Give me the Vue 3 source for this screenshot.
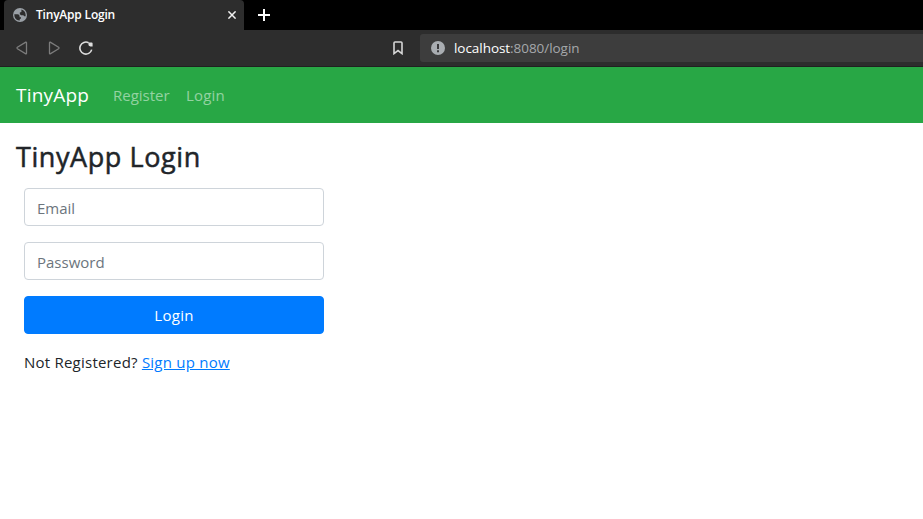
<script setup>
import { ref } from 'vue'

const email = ref('')
const password = ref('')
</script>

<template>
  <div class="window">
    <div class="tabs">
      <div class="tab">
        <svg class="globe" viewBox="0 0 14 14">
          <circle cx="7" cy="7" r="7" fill="#9aa0a6" />
          <path d="M1.3 6.2H4.6Q6.6 6.4 6.6 8.2V9.2H8V10.6L6.8 11V12.6Q2.6 12.4 1.5 8.6Z" fill="#2d2d2d" />
          <path d="M8.4 1.5Q12.2 2.6 12.6 6.4V8.2H11.2L10.4 7.2H8.2L6.8 6.2V4.6L8.4 4Z" fill="#2d2d2d" />
        </svg>
        <span class="tab-title">TinyApp Login</span>
        <svg class="close" viewBox="0 0 8 8"><path d="M.4 .4 7.6 7.6M7.6 .4.4 7.6" /></svg>
      </div>
      <svg class="plus" viewBox="0 0 12 12"><path d="M6 0V12M0 6H12" /></svg>
    </div>

    <div class="toolbar">
      <svg class="arrow back" viewBox="0 0 12 14"><path d="M9.8 1.1 1.4 6.3Q.6 7 1.4 7.7L9.8 12.9Q10.5 13.1 10.5 12.3V1.7Q10.5.9 9.8 1.1Z" /></svg>
      <svg class="arrow forward" viewBox="0 0 12 14"><path d="M2.2 1.1 10.6 6.3Q11.4 7 10.6 7.7L2.2 12.9Q1.5 13.1 1.5 12.3V1.7Q1.5.9 2.2 1.1Z" /></svg>
      <svg class="reload" viewBox="0 0 14 14">
        <path d="M9.6 1.7A6 6 0 1 0 12.7 8.6" fill="none" stroke="#dedede" stroke-width="1.6" />
        <path d="M9.4 1.6H12.6Q13.6 1.6 13.6 2.6V5.4H11.4Q9.2 5.2 9.4 3.2Z" fill="#dedede" />
      </svg>
      <svg class="bookmark" viewBox="0 0 10 14"><path d="M1 2Q1 1 2 1H8Q9 1 9 2V12.6L5 9.6 1 12.6Z" /></svg>
      <div class="address">
        <svg class="info" viewBox="0 0 14 14">
          <circle cx="7" cy="7" r="7" fill="#a9adb1" />
          <path d="M6 3H8V8H6ZM6 9.3H8V11.2H6Z" fill="#3a3a3c" />
        </svg>
        <span class="url"><span class="host">localhost</span>:8080/login</span>
      </div>
    </div>

    <nav class="navbar">
      <a class="brand">TinyApp</a>
      <a class="link register">Register</a>
      <a class="link login">Login</a>
    </nav>

    <main>
      <h1>TinyApp Login</h1>
      <form @submit.prevent>
        <input v-model="email" type="email" placeholder="Email">
        <input v-model="password" type="password" placeholder="Password">
        <button type="submit">Login</button>
        <p>Not Registered? <a>Sign up now</a></p>
      </form>
    </main>
  </div>
</template>

<style>
body {
  margin: 0;
  background: #fff;
}
</style>

<style scoped>
* {
  box-sizing: border-box;
}
.window {
  width: 100%;
  height: 519px;
  overflow: hidden;
  font-family: "Open Sans", "Noto Sans", sans-serif;
  font-size: 15px;
  color: #212529;
  background: #fff;
}
svg {
  display: block;
  flex: none;
}
.tabs {
  display: flex;
  align-items: center;
  height: 30px;
  padding-left: 4px;
  background: #000;
}
.tab {
  display: flex;
  align-items: center;
  width: 240px;
  height: 30px;
  padding: 0 8px 0 9px;
  border-radius: 4px 4px 0 0;
  background: #2d2d2d;
}
.globe {
  width: 14px;
  height: 14px;
}
.tab-title {
  flex: 1;
  margin-left: 9px;
  color: #fff;
  font-size: 12px;
  font-weight: 600;
  letter-spacing: -0.2px;
  line-height: 30px;
  white-space: nowrap;
}
.close {
  width: 8px;
  height: 8px;
}
.close path {
  stroke: #f2f2f2;
  stroke-width: 1.5;
}
.plus {
  width: 12px;
  height: 12px;
  margin-left: 14px;
}
.plus path {
  stroke: #fff;
  stroke-width: 2;
}
.toolbar {
  display: flex;
  align-items: center;
  height: 37px;
  padding-left: 16px;
  border-bottom: 1px solid #202020;
  background: #2d2d2d;
}
.arrow {
  width: 12px;
  height: 14px;
}
.arrow path {
  fill: none;
  stroke: #7c7c7c;
  stroke-width: 1.3;
}
.forward {
  margin-left: 20px;
}
.reload {
  width: 14px;
  height: 14px;
  margin-left: 19px;
}
.bookmark {
  width: 10px;
  height: 14px;
  margin-left: 300px;
}
.bookmark path {
  fill: none;
  stroke: #d6d6d6;
  stroke-width: 1.6;
}
.address {
  display: flex;
  flex: 1;
  align-items: center;
  height: 28px;
  margin-left: 17px;
  padding-left: 11px;
  border-radius: 3px 0 0 3px;
  background: #3d3d3d;
}
.info {
  width: 14px;
  height: 14px;
}
.url {
  margin-left: 9px;
  color: #a5a8ab;
  font-size: 13.5px;
  letter-spacing: -0.05px;
  line-height: 28px;
}
.host {
  color: #fff;
}
.navbar {
  display: flex;
  align-items: center;
  height: 56px;
  padding: 0 16px;
  background: #28a745;
}
.brand {
  width: 97px;
  color: #fff;
  font-size: 19px;
  letter-spacing: 0.2px;
}
.link {
  color: rgba(255, 255, 255, 0.5);
}
.register {
  width: 73px;
}
.login {
  letter-spacing: 0.2px;
}
main {
  padding: 17px 16px 16px;
}
h1 {
  height: 34px;
  margin: 0 0 14px;
  font-size: 27px;
  font-weight: 400;
  letter-spacing: 0.58px;
  line-height: 34px;
  -webkit-text-stroke: 0.5px #212529;
}
form {
  display: flex;
  flex-direction: column;
  gap: 16px;
  width: 300px;
  margin-left: 8px;
}
input,
button {
  width: 300px;
  height: 38px;
  margin: 0;
  border: 1px solid #ced4da;
  border-radius: 4px;
  font: inherit;
}
input {
  padding: 3px 12px 1px;
  outline: none;
  background: #fff;
}
input::placeholder {
  color: #6c757d;
  opacity: 1;
}
button {
  padding: 0;
  border-color: #007bff;
  background: #007bff;
  color: #fff;
  letter-spacing: 0.3px;
}
p {
  margin: 0;
  letter-spacing: 0.23px;
  line-height: 24px;
  white-space: nowrap;
}
p a {
  color: #007bff;
  text-decoration: underline;
}
</style>
